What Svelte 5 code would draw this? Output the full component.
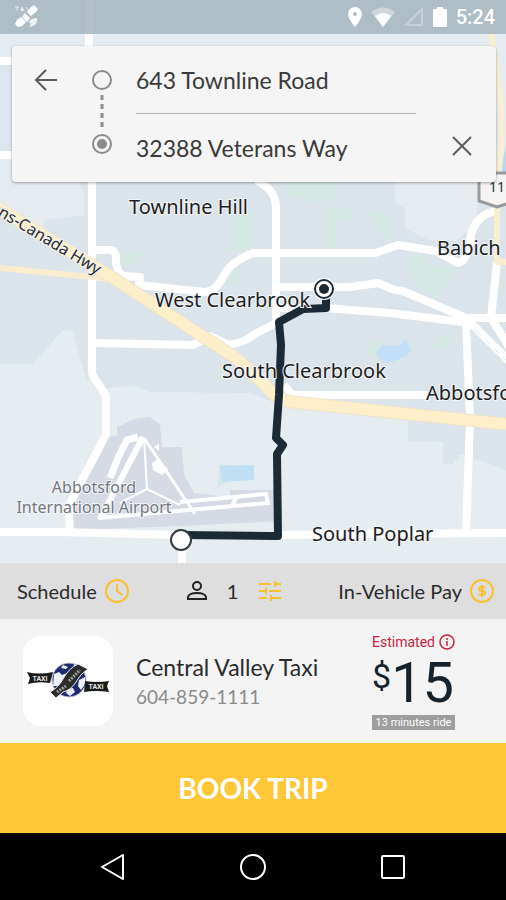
<script>
  let from = $state('643 Townline Road')
  let to = $state('32388 Veterans Way')
  let passengers = $state(1)

  const company = { name: 'Central Valley Taxi', phone: '604-859-1111' }
  const estimate = { price: 15, minutes: 13 }

  // white streets on the map
  const streets = [
    'M89 0V182',
    'M0 61H14M0 155H14',
    'M92 180V368Q91 376 98 383L106 396V434L97 452L82 480L69 506L70 534',
    'M96 250H110Q117 250 116 262Q117 273 124 276L140 277L139 285L205 292Q215 292 223 277Q230 262 253 253H375L398 245L436 251L458 263Q467 262 470 240Q474 214 497 211',
    'M256 180Q276 190 276 207V322',
    'M96 343L193 345L210 336L229 345Q246 342 253 335L278 322',
    'M279 287H350L378 283L395 290L403 291L466 318L506 318',
    'M279 308L325 308L390 313L462 322L474 326L510 362',
    'M497 262L491 318L510 348',
    'M466 322L470 420L466 534',
    'M284 385L292 395H430',
    'M0 532H60L180 535H280L340 534L506 533',
    'M182 545V564'
  ]

  const parks = [
    'M283 182H337V198L318 203L290 196Z',
    'M325 206L353 208V217L338 222V247H325Z',
    'M374 210L386 213L394 236L387 240L374 224Z',
    'M409 252L426 255L428 264L451 267L452 280L442 287L438 300L427 292L418 284L410 272Z',
    'M230 218L253 214V248L231 253Z',
    'M228 275L240 267V282L226 288Z',
    'M119 255L137 251L140 264L122 266Z',
    'M361 352L376 340L410 348L400 364L380 360Z',
    'M219 464L238 466L236 477L217 488Z',
    'M436 338L453 330L450 344L438 350Z'
  ]

  const labels = [
    { x: 129, y: 214, text: 'Townline Hill' },
    { x: 155, y: 307, text: 'West Clearbrook' },
    { x: 222, y: 378, text: 'South Clearbrook' },
    { x: 437, y: 255, text: 'Babich' },
    { x: 426, y: 400, text: 'Abbotsford' },
    { x: 312, y: 541, text: 'South Poplar' }
  ]
</script>

<div class="screen">
  <section class="map-area">
    <svg class="map" viewBox="0 0 506 563" preserveAspectRatio="xMidYMid slice" role="img" aria-label="Route map">
      <rect width="506" height="563" fill="#dbe4eb" />
      <path d="M0 0H506V182H0Z" fill="#e4ebf1" />
      <path d="M0 65H30V155H0Z" fill="#dde5ee" />
      <path d="M0 180H78L84 196V215L45 220L42 231L0 204Z" fill="#e6ebf0" />
      <path d="M395 182H480L476 224L455 241L428 240L405 228V208L395 204Z" fill="#e6ebef" />
      <path d="M0 364H33L62 331L72 330L86 378L106 388L135 386L150 392L250 393L278 404L408 418V442H443V464H453L460 454L490 464L506 471V563H0Z" fill="#e6edf1" />
      {#each parks as d}
        <path {d} fill="#d5e8e4" />
      {/each}
      <path d="M376 353L382 345L400 346L405 339L411 350L405 357L388 363L377 358Z" fill="#c3def8" />
      <path d="M220 466L254 465V480L222 482Z" fill="#bfe0f4" />
      <path d="M506 145L501 170L506 176Z" fill="#b7d8f3" />

      <!-- airport grounds and runways -->
      <path d="M107 437L117 436V427L135 419L150 417L160 425L162 447L182 447L184 475L194 493L230 497V490H280V521L180 526L73 530L69 508L82 480Z" fill="#d5dae4" />
      <g fill="none" stroke="#fff" stroke-width="3">
        <path d="M143 437L100 519" stroke-width="6" />
        <path d="M144 438L147 489L120 503M147 489L180 505" stroke-width="2" />
        <path d="M144 438L195 514" />
        <path d="M138 437L127 440L118 458L110 478" stroke-width="7" />
        <path d="M98 518L268 503L266 494L180 502M232 506L236 498" stroke-width="4" />
      </g>
      <path d="M152 463L158 459L168 469L162 475L153 470ZM154 447L159 444V451Z" fill="#fff" />

      <g fill="none" stroke="#fff" stroke-width="8" stroke-linejoin="round">
        {#each streets as d}
          <path {d} />
        {/each}
      </g>
      <path d="M475 330L506 360" stroke="#dbe4eb" stroke-width="1" stroke-dasharray="8 5" />

      <g fill="none" stroke-linejoin="round">
        <path d="M0 268L92 277L115 280" stroke="#faedcf" stroke-width="6" />
        <path d="M-5 206L110 276L236 358L262 382Q276 400 292 402L506 424" stroke="#efe3cb" stroke-width="13" />
        <path d="M-5 206L110 276L236 358L262 382Q276 400 292 402L506 424" stroke="#fdefca" stroke-width="11" />
        <path d="M488 0L493 45L500 95L502 130L498 180" stroke="#f7efd3" stroke-width="6" />
        <path d="M497 208V262H506" stroke="#faedcf" stroke-width="6" />
      </g>

      <path d="M479 173H516V201L497 207L479 201Z" fill="#f5f5f5" stroke="#999" stroke-width="3" />
      <text class="shield" x="489" y="192">11</text>

      <path
        d="M182 535L278 536L277 454L283 445L276 438L279 395L281 345L279 322L303 309L326 308V294"
        fill="none" stroke="#1c2a35" stroke-width="8" stroke-linejoin="round"
      />

      {#each labels as l}
        <text class="place" x={l.x} y={l.y}>{l.text}</text>
      {/each}
      <text class="airport" x="94" y="493">Abbotsford</text>
      <text class="airport" x="94" y="513">International Airport</text>
      <text class="highway" transform="translate(97 275) rotate(31)">Trans-Canada Hwy</text>

      <circle cx="324" cy="289" r="11" fill="#fff" />
      <circle cx="324" cy="289" r="9" fill="#fff" stroke="#1c2a35" stroke-width="2" />
      <circle cx="324" cy="289" r="5" fill="#1c2a35" />
      <circle cx="181" cy="540" r="10" fill="#fff" stroke="#333b42" stroke-width="2" />
    </svg>

    <header class="status">
      <svg width="26" height="24" viewBox="0 0 26 24" fill="#fff" aria-hidden="true">
        <path d="M17 2L20 0L24 4L22 7L17 11L13 7ZM11 8L16 13L13 17L8 12ZM3 15L7 12L12 17L8 21L4 22L1 19Z" />
        <path d="M15 17Q17 13 23 13Q24 19 19 21L15 22L17 19Z" opacity=".8" />
        <path d="M1 2H5M3 2V6M7 6L8 2L10 6M12 2L15 6" stroke="#fff" opacity=".7" />
      </svg>
      <div class="status-right">
        <svg width="14" height="20" viewBox="0 0 14 20" aria-hidden="true">
          <path fill="#fff" fill-rule="evenodd" d="M7 0A7 7 0 0 0 0 7C0 12 7 20 7 20S14 12 14 7A7 7 0 0 0 7 0ZM7 5A2 2 0 1 1 7 9A2 2 0 0 1 7 5Z" />
        </svg>
        <svg width="24" height="20" viewBox="0 0 24 20" aria-hidden="true">
          <path d="M0 5Q12-4 24 5L12 20Z" fill="#fff" opacity=".4" />
          <path d="M4 9Q12 3 20 9L12 20Z" fill="#fff" />
        </svg>
        <svg width="20" height="20" viewBox="0 0 20 20" aria-hidden="true">
          <path d="M2 18L18 2V18Z" fill="none" stroke="#fff" stroke-width="2" opacity=".3" />
        </svg>
        <svg width="14" height="20" viewBox="0 0 14 20" aria-hidden="true">
          <path d="M4 0H10V2H13Q14 2 14 3V19Q14 20 13 20H1Q0 20 0 19V3Q0 2 1 2H4Z" fill="#fff" />
        </svg>
        <span class="clock">5:24</span>
      </div>
    </header>

    <form class="trip" onsubmit={e => e.preventDefault()}>
      <button type="button" class="icon-btn back" aria-label="Back">
        <svg width="24" height="24" viewBox="0 0 24 24" fill="none" stroke="#5c5c5c" stroke-width="2">
          <path d="M23 12H2M12 2L2 12L12 22" />
        </svg>
      </button>
      <svg class="stops" width="20" height="86" viewBox="0 0 20 86" fill="none" stroke="#8b8b8b" aria-hidden="true">
        <circle cx="10" cy="11" r="9" stroke-width="2" />
        <path d="M10 26V58" stroke-width="3" stroke-dasharray="5 4" />
        <circle cx="10" cy="75" r="9" stroke-width="2" />
        <circle cx="10" cy="75" r="5" fill="#8b8b8b" stroke="none" />
      </svg>
      <div class="fields">
        <input aria-label="Pickup address" bind:value={from} />
        <hr />
        <input aria-label="Destination address" bind:value={to} />
      </div>
      <button type="button" class="icon-btn clear" aria-label="Clear destination" onclick={() => (to = '')}>
        <svg width="20" height="20" viewBox="0 0 20 20" fill="none" stroke="#5c5c5c" stroke-width="2">
          <path d="M1 1L19 19M19 1L1 19" />
        </svg>
      </button>
    </form>
  </section>

  <div class="options">
    <button type="button">
      Schedule
      <svg width="24" height="24" viewBox="0 0 24 24" fill="none" stroke="#fbc02d" stroke-width="2" aria-hidden="true">
        <circle cx="12" cy="12" r="11" />
        <path d="M12 5V12L17 16" />
      </svg>
    </button>
    <button type="button" class="riders" aria-label="Passengers and filters">
      <svg width="20" height="20" viewBox="0 0 20 20" fill="none" stroke="#222" stroke-width="2" aria-hidden="true">
        <circle cx="10" cy="5" r="4" />
        <path d="M1 18V16Q2 12 10 12Q18 12 19 16V18Z" />
      </svg>
      <span>{passengers}</span>
      <svg width="22" height="20" viewBox="0 0 22 20" fill="none" stroke="#fbc02d" stroke-width="2" aria-hidden="true">
        <path d="M0 3H12M16 3H22M16 0V6M0 10H6M10 10H22M7 7V13M0 17H8M12 17H22M12 14V20" />
      </svg>
    </button>
    <button type="button">
      In-Vehicle Pay
      <svg width="24" height="24" viewBox="0 0 24 24" fill="none" stroke="#fbc02d" stroke-width="2" aria-hidden="true">
        <circle cx="12" cy="12" r="11" />
        <path d="M15 9Q14 8 12 8Q9 8 9 10Q9 12 12 12Q15 12 15 14Q15 16 12 16Q10 16 9 15M12 6V18" />
      </svg>
    </button>
  </div>

  <section class="ride">
    <svg class="logo" width="90" height="90" viewBox="0 0 90 90" role="img" aria-label="Central Valley Taxi logo">
      <rect width="90" height="90" rx="18" fill="#fff" />
      <circle cx="46" cy="44" r="17" fill="#1d2c70" stroke="#c9cedb" stroke-width="1" />
      <path d="M31 38L36 36L39 39L44 37L46 41L36 50L30 50ZM40 29L45 31L43 33L38 32ZM51 28L57 32L50 34ZM56 44L62 41L62 48L58 54L55 50ZM44 53L50 52L52 56L47 60L43 57Z" fill="#eef1f7" />
      <path d="M4 36Q16 39 30 36L27 47Q15 45 5 48L7 42Z" fill="#1b1b1b" />
      <path d="M62 45Q74 47 86 45L84 50L86 56Q73 54 61 56Z" fill="#1b1b1b" />
      <path d="M27 56Q35 52 40 43Q46 32 55 28L65 33Q57 38 53 46Q48 54 40 56L33 62Z" fill="#2c2c2c" stroke="#eee" stroke-width="1" />
      <path d="M34 56L43 50M46 45L57 34" stroke="#9a9a9a" stroke-width="3" stroke-dasharray="2 1" />
      <text x="17" y="45" class="ribbon">TAXI</text>
      <text x="73" y="53" class="ribbon">TAXI</text>
    </svg>
    <div class="company">
      <h2>{company.name}</h2>
      <a href="tel:{company.phone}">{company.phone}</a>
    </div>
    <div class="fare">
      <div class="estimated">
        Estimated
        <svg width="16" height="16" viewBox="0 0 16 16" fill="none" stroke="#c8243c" aria-hidden="true">
          <circle cx="8" cy="8" r="7" stroke-width="1.5" />
          <path d="M8 4V6M8 7V12" stroke-width="1.5" />
        </svg>
      </div>
      <div class="price"><span class="currency">$</span>{estimate.price}</div>
      <div class="duration">{estimate.minutes} minutes ride</div>
    </div>
  </section>

  <button type="button" class="book">BOOK TRIP</button>

  <nav class="system">
    <button type="button" aria-label="Back">
      <svg width="28" height="28" viewBox="0 0 28 28"><path d="M3 14L24 2V26Z" /></svg>
    </button>
    <button type="button" aria-label="Home">
      <svg width="28" height="28" viewBox="0 0 28 28"><circle cx="14" cy="14" r="12" /></svg>
    </button>
    <button type="button" aria-label="Recent apps">
      <svg width="28" height="28" viewBox="0 0 28 28"><rect x="3" y="3" width="22" height="22" rx="1" /></svg>
    </button>
  </nav>
</div>

<style>
  :global(body) {
    margin: 0;
  }
  .screen {
    display: flex;
    flex-direction: column;
    min-height: 100vh;
    background: #f4f4f4;
    color: #2b2b2b;
    font-family: Lato, sans-serif;
  }
  button {
    border: 0;
    padding: 0;
    background: none;
    color: inherit;
    font: inherit;
    cursor: pointer;
  }
  svg {
    display: block;
    flex: none;
  }

  .map-area {
    position: relative;
    flex: 1;
    min-height: 320px;
    overflow: hidden;
  }
  .map {
    position: absolute;
    inset: 0;
    width: 100%;
    height: 100%;
  }
  .map text {
    font-family: "Noto Sans", sans-serif;
    paint-order: stroke;
    stroke: #f2f5f8;
    stroke-width: 2px;
  }
  .place {
    font-size: 20px;
    fill: #1d1d1d;
  }
  .airport {
    font-size: 16px;
    fill: #74787e;
    text-anchor: middle;
  }
  .highway {
    font-size: 16px;
    fill: #2b2b2b;
    text-anchor: end;
  }
  .shield {
    font-size: 14px;
    fill: #333;
  }

  .status {
    position: relative;
    display: flex;
    align-items: center;
    justify-content: space-between;
    height: 34px;
    padding: 0 11px 0 14px;
    background: rgba(166, 181, 190, 0.85);
  }
  .status-right {
    display: flex;
    align-items: center;
    gap: 9px;
  }
  .clock {
    color: #fff;
    font: 500 20px/24px Roboto, sans-serif;
  }

  .trip {
    position: relative;
    display: flex;
    height: 136px;
    margin: 12px 10px 0 12px;
    border-radius: 4px;
    background: #f5f5f5;
    box-shadow: 0 1px 3px rgba(0, 0, 0, 0.35);
  }
  .icon-btn {
    display: flex;
    align-items: center;
    justify-content: center;
    width: 44px;
    height: 44px;
  }
  .back {
    margin: 12px 0 0 12px;
  }
  .stops {
    margin: 23px 24px 0 24px;
  }
  .fields {
    flex: 1;
    min-width: 0;
    padding-top: 12px;
  }
  .fields input {
    display: block;
    box-sizing: border-box;
    width: 100%;
    height: 44px;
    border: 0;
    padding: 0;
    outline: 0;
    background: none;
    color: #3a3a3a;
    font: 23px Lato, sans-serif;
  }
  .fields hr {
    height: 1px;
    margin: 11px 0 12px;
    border: 0;
    background: #b5b5b5;
  }
  .clear {
    align-self: flex-end;
    margin: 0 12px 14px 24px;
  }

  .options {
    display: flex;
    align-items: center;
    justify-content: space-between;
    height: 56px;
    padding: 0 12px 0 17px;
    background: #dedede;
  }
  .options button {
    display: flex;
    align-items: center;
    gap: 8px;
    font-size: 20px;
    line-height: 24px;
  }
  .options .riders {
    gap: 20px;
  }
  .riders span {
    min-width: 12px;
  }

  .ride {
    display: flex;
    align-items: center;
    height: 124px;
    padding: 0 51px 0 23px;
    background: #f4f4f4;
  }
  .ribbon {
    fill: #e8e8e8;
    font: bold 7px Roboto, sans-serif;
    text-anchor: middle;
  }
  .company {
    flex: 1;
    padding-left: 23px;
  }
  .company h2 {
    margin: 0;
    font-size: 23px;
    font-weight: 400;
    line-height: 32px;
  }
  .company a {
    color: #8a8a8a;
    font-size: 19px;
    line-height: 28px;
    text-decoration: none;
  }
  .fare {
    font-family: Roboto, sans-serif;
  }
  .estimated {
    display: flex;
    align-items: center;
    justify-content: space-between;
    gap: 4px;
    color: #c8243c;
    font-size: 14px;
    line-height: 18px;
  }
  .price {
    display: flex;
    align-items: flex-start;
    color: #16232d;
    font-size: 56px;
    line-height: 64px;
  }
  .currency {
    font-size: 34px;
    line-height: 50px;
  }
  .duration {
    background: #9e9e9e;
    color: #fff;
    font-size: 11px;
    line-height: 15px;
    text-align: center;
  }

  .book {
    height: 90px;
    background: #ffc636;
    color: #fff;
    font-size: 28px;
    font-weight: 700;
  }

  .system {
    display: flex;
    justify-content: center;
    gap: 84px;
    height: 67px;
    background: #000;
  }
  .system button {
    display: flex;
    align-items: center;
    justify-content: center;
    width: 56px;
  }
  .system svg {
    fill: none;
    stroke: #fff;
    stroke-width: 2;
    stroke-linejoin: round;
  }
</style>
